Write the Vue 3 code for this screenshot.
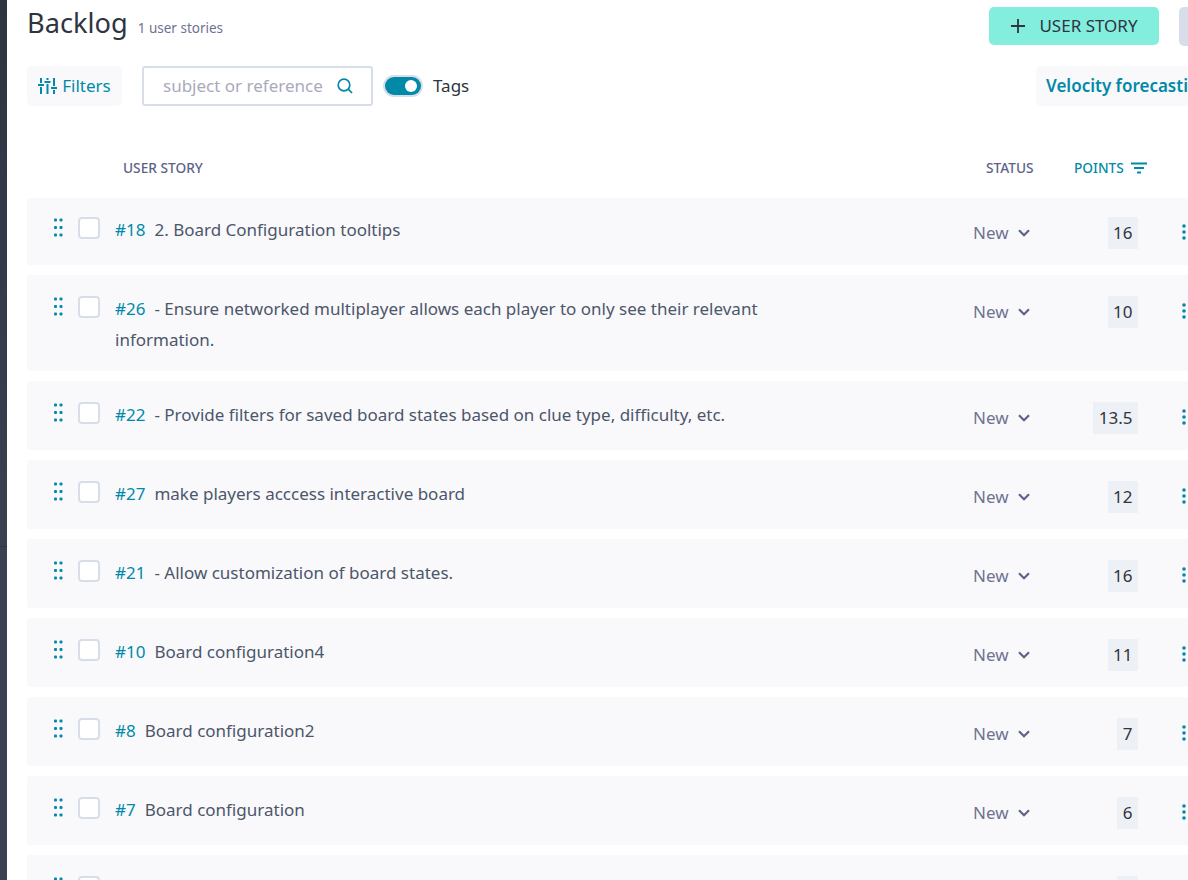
<script setup>
const stories = [
  { ref: 18, subject: '2. Board Configuration tooltips', points: '16' },
  { ref: 26, subject: '- Ensure networked multiplayer allows each player to only see their relevant information.', points: '10' },
  { ref: 22, subject: '- Provide filters for saved board states based on clue type, difficulty, etc.', points: '13.5' },
  { ref: 27, subject: 'make players acccess interactive board', points: '12' },
  { ref: 21, subject: '- Allow customization of board states.', points: '16' },
  { ref: 10, subject: 'Board configuration4', points: '11' },
  { ref: 8, subject: 'Board configuration2', points: '7' },
  { ref: 7, subject: 'Board configuration', points: '6' },
  { ref: 5, subject: 'Board', points: '5' }
]
</script>

<template>
  <div class="app">
    <aside class="sidebar">
      <div class="side-top"></div>
      <div class="side-bottom"></div>
    </aside>

    <main class="main">
      <header class="head">
        <div class="title-wrap">
          <h1>Backlog</h1>
          <span class="count">1 user stories</span>
        </div>
        <div class="head-actions">
          <button class="add-btn">
            <svg width="16" height="16" viewBox="0 0 16 16"><path d="M8 1v14M1 8h14" stroke="#2e3440" stroke-width="1.8" fill="none" /></svg>
            <span class="lift">USER STORY</span>
          </button>
          <button class="bulk-btn"></button>
        </div>
      </header>

      <div class="toolbar">
        <button class="filters">
          <svg width="19" height="18" viewBox="0 0 19 18" fill="none" stroke="#008aa8" stroke-width="2">
            <path d="M3 1v5M3 10v7M9.500 1v2M9.500 7v10M16 1v8M16 13v4M0 8h6M6.500 5h6M13 11h6" />
          </svg>
          <span class="lift">Filters</span>
        </button>
        <div class="search">
          <span class="placeholder lift">subject or reference</span>
          <svg width="16" height="16" viewBox="0 0 16 16" fill="none" stroke="#008aa8" stroke-width="1.7">
            <circle cx="7" cy="7" r="5.800" />
            <path d="M11.200 11.200L15 15" />
          </svg>
        </div>
        <div class="toggle"><span class="knob"></span></div>
        <span class="tags lift">Tags</span>
        <button class="velocity">Velocity forecasting</button>
      </div>

      <div class="table-head">
        <span class="th-story lift">USER STORY</span>
        <span class="th-status lift">STATUS</span>
        <span class="th-points lift">POINTS</span>
        <svg class="sort" width="16" height="12" viewBox="0 0 16 12" fill="none" stroke="#008aa8" stroke-width="2">
          <path d="M0 1.500h16M3 6h10M6 10.500h4" />
        </svg>
      </div>

      <div class="rows">
        <div v-for="s in stories" :key="s.ref" class="row">
          <svg class="drag" width="11" height="24" viewBox="0 0 11 24" fill="#008aa8">
            <rect x="2" y="3.500" width="3" height="3" rx="1" />
            <rect x="7.500" y="3.500" width="3" height="3" rx="1" />
            <rect x="2" y="11" width="3" height="3" rx="1" />
            <rect x="7.500" y="11" width="3" height="3" rx="1" />
            <rect x="2" y="18.500" width="3" height="3" rx="1" />
            <rect x="7.500" y="18.500" width="3" height="3" rx="1" />
          </svg>
          <span class="check"></span>
          <div class="subject"><a class="ref">#{{ s.ref }}</a><span class="text">{{ s.subject }}</span></div>
          <div class="status">
            <span>New</span>
            <svg width="12" height="8" viewBox="0 0 12 8" fill="none" stroke="#5d6388" stroke-width="2.200"><path d="M1 1.200l5 5 5-5" /></svg>
          </div>
          <div class="points-cell"><span class="points">{{ s.points }}</span></div>
          <svg class="more" width="4" height="16" viewBox="0 0 4 16" fill="#008aa8">
            <circle cx="2" cy="2" r="1.800" />
            <circle cx="2" cy="8" r="1.800" />
            <circle cx="2" cy="14" r="1.800" />
          </svg>
        </div>
      </div>
    </main>
  </div>
</template>

<style>
html, body {
  margin: 0;
  height: 880px;
  overflow: hidden;
  background: #fff;
}
</style>

<style scoped>
.app {
  display: flex;
  width: 1188px;
  height: 880px;
  overflow: hidden;
  font-family: "Noto Sans", "Open Sans", sans-serif;
  color: #2e3440;
}
.sidebar {
  flex: none;
  width: 7px;
  display: flex;
  flex-direction: column;
}
.side-top {
  height: 546px;
  background: linear-gradient(#2e3440, #3b4050);
}
.side-bottom {
  flex: 1;
  border-top: 1px solid #2e3440;
  background: #3c4152;
}
.main {
  flex: none;
  width: 1300px;
  padding-left: 20px;
  box-sizing: border-box;
}
button {
  font: inherit;
  border: 0;
  margin: 0;
  padding: 0;
}
.lift {
  margin-top: -2px;
}
.head {
  display: flex;
  justify-content: space-between;
  width: 1194px;
  height: 66px;
}
.title-wrap {
  display: flex;
  align-items: baseline;
  gap: 10px;
  height: 46px;
}
h1 {
  margin: 0;
  font-size: 27.200px;
  font-weight: 400;
  line-height: 46px;
}
.count {
  font-size: 13.500px;
  color: #6e7191;
}
.head-actions {
  display: flex;
  gap: 20px;
  padding-top: 7px;
}
.add-btn {
  width: 170px;
  height: 38px;
  background: #83eede;
  border-radius: 5px;
  display: flex;
  align-items: center;
  justify-content: center;
  gap: 13px;
  font-size: 17px;
  color: #2e3440;
}
.bulk-btn {
  width: 42px;
  height: 39px;
  background: #d8dee9;
  border-radius: 5px;
}
.toolbar {
  display: flex;
  align-items: center;
  width: 1189px;
  height: 40px;
}
.filters {
  width: 95px;
  height: 40px;
  background: #f9f9fb;
  border-radius: 5px;
  color: #008aa8;
  font-size: 17px;
  display: flex;
  align-items: center;
  justify-content: center;
  gap: 5px;
}
.search {
  margin-left: 20px;
  width: 231px;
  height: 40px;
  box-sizing: border-box;
  border: 2px solid #d8dee9;
  border-radius: 3px;
  display: flex;
  align-items: center;
  justify-content: space-between;
  padding: 0 18px 0 19px;
}
.placeholder {
  font-size: 17px;
  color: #a9aabc;
}
.toggle {
  margin-left: 12px;
  width: 36px;
  height: 18px;
  border-radius: 9px;
  background: #008aa8;
  box-shadow: 0 0 0 2px #d8dee9;
  position: relative;
}
.knob {
  position: absolute;
  right: 4px;
  top: 3px;
  width: 12px;
  height: 12px;
  border-radius: 50%;
  background: #fff;
}
.tags {
  margin-left: 12px;
  font-size: 17px;
}
.velocity {
  margin-left: auto;
  width: 180px;
  height: 40px;
  background: #f9f9fb;
  border-radius: 5px;
  color: #008aa8;
  font-size: 17px;
  font-weight: 600;
  text-align: left;
  padding: 0 0 2px 10px;
  white-space: nowrap;
  overflow: hidden;
}
.table-head {
  display: flex;
  align-items: center;
  height: 60px;
  padding-top: 32px;
  font-size: 13.700px;
  font-weight: 500;
  color: #5d6388;
}
.th-story {
  margin-left: 96px;
  width: 863px;
}
.th-status {
  width: 88px;
}
.th-points {
  width: 57px;
  color: #008aa8;
}
.rows {
  display: flex;
  flex-direction: column;
  gap: 10px;
  width: 1221px;
}
.row {
  flex: none;
  display: flex;
  align-items: flex-start;
  box-sizing: border-box;
  padding: 19px 0 15px 25px;
  background: #f9f9fb;
  border-radius: 3px;
}
.row:first-child {
  padding-top: 17px;
}
.drag {
  flex: none;
}
.check {
  flex: none;
  width: 22px;
  height: 22px;
  margin: 2px 0 0 15px;
  box-sizing: border-box;
  border: 2px solid #d8dee9;
  border-radius: 4px;
  background: #fff;
}
.subject {
  flex: none;
  width: 660px;
  margin: -1px 0 1px 15px;
  font-size: 17px;
  line-height: 31px;
  color: #4c566a;
}
.ref {
  color: #008aa8;
  margin-right: 9px;
}
.status {
  flex: none;
  margin: 5px 0 0 198px;
  width: 100px;
  display: flex;
  align-items: center;
  gap: 9px;
  font-size: 17px;
  line-height: 26px;
  color: #70728f;
}
.points-cell {
  flex: none;
  width: 65px;
  margin: 2px 0 1px;
  display: flex;
  justify-content: flex-end;
}
.points {
  height: 32px;
  padding: 0 5.500px;
  background: #edf0f5;
  font-size: 17px;
  line-height: 32px;
  text-align: center;
  color: #2e3440;
}
.more {
  flex: none;
  margin: 9px 0 0 44px;
}
</style>
